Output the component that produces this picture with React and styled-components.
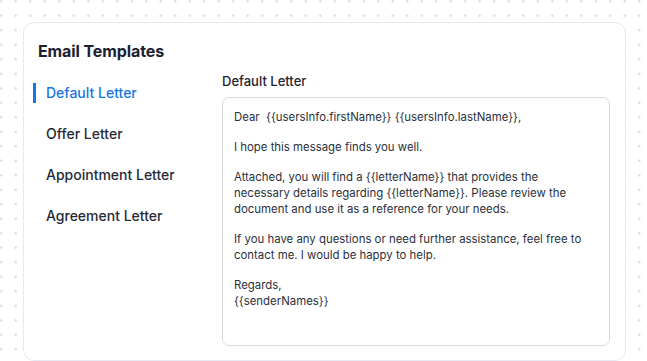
import React from 'react';
import styled, { createGlobalStyle } from 'styled-components';

const GlobalStyle = createGlobalStyle`
    html, body {
        margin: 0;
        padding: 0;
        background-color: #ffffff;
        background-image: radial-gradient(circle, #d9dce2 1.1px, transparent 1.4px);
        background-size: 14.5px 14.5px;
        background-position: -6px -6px;
        font-family: Inter, "Noto Sans", sans-serif;
        -webkit-font-smoothing: antialiased;
    }
`;

const Page = styled.div`
    width: 647px;
    height: 361px;
    padding: 22px 0 0 23px;
    box-sizing: border-box;
    overflow: hidden;
`;

const Card = styled.div`
    width: 603px;
    height: 339px;
    box-sizing: border-box;
    background: #ffffff;
    border: 1px solid #e6e9f2;
    border-radius: 11px;
    display: flex;
    flex-direction: column;
`;

const Title = styled.h2`
    margin: 0;
    padding: 16px 14px 0;
    font-size: 16px;
    line-height: 24px;
    font-weight: 700;
    color: #1c2130;
    letter-spacing: -0.1px;
`;

const Body = styled.div`
    flex: 1;
    display: flex;
    margin-top: 9px;
    padding: 0 15px 14px 9px;
    min-height: 0;
`;

const Sidebar = styled.nav`
    width: 189px;
    flex-shrink: 0;
    display: flex;
    flex-direction: column;
    align-items: flex-start;
    gap: 21px;
    padding-top: 11px;
`;

const NavItem = styled.div`
    border-left: 3px solid ${(p) => (p.$active ? '#1677e5' : 'transparent')};
    padding-left: 10px;
    font-size: 14px;
    line-height: 20px;
    font-weight: 500;
    color: ${(p) => (p.$active ? '#1677e5' : '#252a36')};
`;

const Editor = styled.section`
    flex: 1;
    min-width: 0;
    display: flex;
    flex-direction: column;
    padding-top: 1px;
`;

const Label = styled.div`
    font-size: 13px;
    line-height: 16px;
    font-weight: 500;
    color: #1f2431;
    margin-bottom: 8px;
`;

const TextBox = styled.div`
    flex: 1;
    border: 1px solid #d7dadf;
    border-radius: 7px;
    padding: 11px 11px;
    font-size: 11.4px;
    line-height: 16px;
    color: #2b303b;
    white-space: pre;
    overflow: hidden;
`;

const Para = styled.p`
    margin: 0 0 14px;
`;

const letters = ['Default Letter', 'Offer Letter', 'Appointment Letter', 'Agreement Letter'];

const App = () => {
    return (
        <>
            <GlobalStyle />
            <Page>
                <Card>
                    <Title>Email Templates</Title>
                    <Body>
                        <Sidebar>
                            {letters.map((name, i) => (
                                <NavItem key={name} $active={i === 0}>{name}</NavItem>
                            ))}
                        </Sidebar>
                        <Editor>
                            <Label>Default Letter</Label>
                            <TextBox>
                                <Para>{'Dear  {{usersInfo.firstName}} {{usersInfo.lastName}},'}</Para>
                                <Para>I hope this message finds you well.</Para>
                                <Para>
                                    {'Attached, you will find a {{letterName}} that provides the\nnecessary details regarding {{letterName}}. Please review the\ndocument and use it as a reference for your needs.'}
                                </Para>
                                <Para>
                                    {'If you have any questions or need further assistance, feel free to\ncontact me. I would be happy to help.'}
                                </Para>
                                <Para>{'Regards,\n{{senderNames}}'}</Para>
                            </TextBox>
                        </Editor>
                    </Body>
                </Card>
            </Page>
        </>
    );
};

export default App;
